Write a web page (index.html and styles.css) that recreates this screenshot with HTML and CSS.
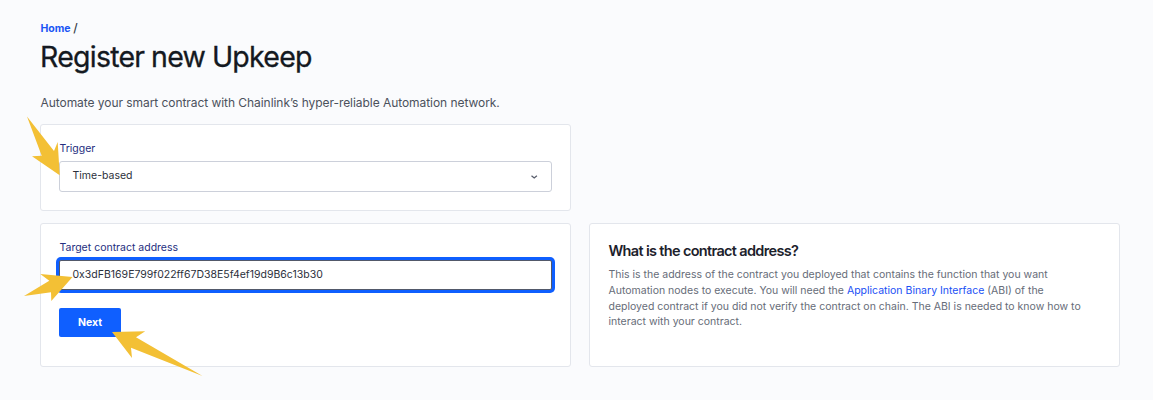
FILE: index.html
```html
<!DOCTYPE html>
<html lang="en">
<head>
<meta charset="utf-8">
<title>Register new Upkeep</title>
<link rel="stylesheet" href="styles.css">
</head>
<body>
<main class="page">
  <nav class="crumbs"><a class="crumb-link" href="#">Home</a><span class="crumb-sep">/</span></nav>
  <h1 class="title">Register new Upkeep</h1>
  <p class="lead">Automate your smart contract with Chainlink’s hyper-reliable Automation network.</p>
  <div class="grid">
    <section class="card trigger">
      <div class="label">Trigger</div>
      <div class="field select"><span>Time-based</span>
        <svg class="chevron" width="8" height="6" viewBox="0 0 8 6"><path d="M1.5 1.7 4.2 4 6.9 1.7" fill="none" stroke="#5a5f6d" stroke-width="1.3"/></svg>
      </div>
    </section>
    <section class="card target">
      <div class="label">Target contract address</div>
      <div class="field input"><span>0x3dFB169E799f022ff67D38E5f4ef19d9B6c13b30</span></div>
      <button class="next">Next</button>
    </section>
    <aside class="card info">
      <h2 class="info-title">What is the contract address?</h2>
      <p class="info-text">This is the address of the contract you deployed that contains the function that you want<br>Automation nodes to execute. You will need the <a class="link" href="#">Application Binary Interface</a> (ABI) of the<br>deployed contract if you did not verify the contract on chain. The ABI is needed to know how to<br>interact with your contract.</p>
    </aside>
  </div>
</main>
<svg class="arrows" width="1153" height="400" viewBox="0 0 1153 400" fill="#f3c035">
  <polygon points="27,116.5 54,151 57.7,142 59.7,175.3 32,156.3 41.7,155.7"/>
  <polygon points="24,296 49.3,280.7 40.3,274 72.5,277 51.3,301 51,292.3"/>
  <polygon points="112,332 145.2,331.2 136,337.3 202.5,376 131,347.7 132,357.9"/>
</svg>
</body>
</html>
```
FILE: styles.css
```css
* { box-sizing: border-box; }
body {
  margin: 0;
  height: 400px;
  overflow: hidden;
  background: #fafbfd;
  font-family: Inter, "Liberation Sans", sans-serif;
  color: #1a2027;
}
.page { padding: 21px 33px 0 40px; }
.crumbs { display: flex; gap: 2.5px; height: 16px; padding-left: 0.5px; font-size: 10.5px; line-height: 16px; }
.crumb-link { color: #1a56f5; font-weight: 700; text-decoration: none; }
.crumb-sep { font-size: 12px; line-height: 14px; color: #353b45; font-weight: 500; }
.title { margin: 2px 0 0; font-size: 28.5px; line-height: 36px; font-weight: 400; letter-spacing: -0.75px; word-spacing: -0.5px; color: #141921; -webkit-text-stroke: 0.3px #141921; white-space: nowrap; }
.lead { margin: 19px 0 0; height: 18px; padding-left: 0.5px; font-size: 12px; line-height: 18px; color: #4b515c; letter-spacing: -0.055px; white-space: nowrap; }
.grid { display: grid; grid-template-columns: 531px 531px; grid-template-rows: 87px 144px; gap: 12px 18px; margin-top: 12px; }
.card { background: #fff; border: 1px solid #e3e6ec; border-radius: 3px; padding: 17px 18px 0; }
.trigger { grid-column: 1 / 3; width: 531px; }
.label { height: 14px; line-height: 14px; padding-left: 0.5px; font-size: 10.5px; color: #252e80; white-space: nowrap; }
.field { display: flex; align-items: center; justify-content: space-between; padding: 0 13px 1px 12.5px; background: #fff; border: 1px solid #ccd0da; border-radius: 3px; font-size: 10.5px; color: #2b303b; }
.select { height: 31px; margin-top: 5px; padding-bottom: 2px; }
.chevron { position: relative; top: 1px; }
.input { height: 30px; margin-top: 5px; border-color: #52596a; border-radius: 2px; box-shadow: 0 0 0 3px #0f5fff; }
.next { display: block; width: 62px; height: 29px; margin-top: 18px; padding: 0; border: 0; border-radius: 2px; background: #0f5fff; color: #fff; font: 700 10.5px/29px Inter, sans-serif; }
.info { padding-left: 18.5px; }
.info-title { margin: 0; height: 20px; font-size: 14.5px; line-height: 20px; font-weight: 600; letter-spacing: -0.67px; color: #1c212b; white-space: nowrap; }
.info-text { margin: 6px 0 0; font-size: 10.5px; line-height: 15.75px; color: #666c78; white-space: nowrap; }
.link { color: #1a4ff5; text-decoration: none; }
.arrows { position: absolute; left: 0; top: 0; pointer-events: none; }
```
